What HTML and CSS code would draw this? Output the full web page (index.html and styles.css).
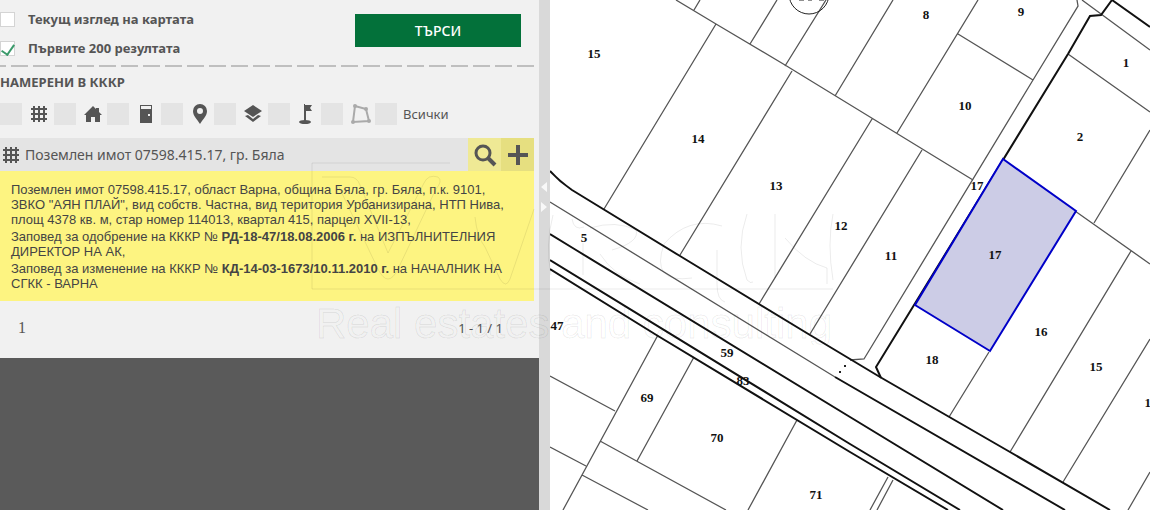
FILE: index.html
```html
<!doctype html>
<html lang="bg">
<head>
    <title>КККР</title>
    <meta charset="utf-8" />
    <meta name="viewport" content="width=device-width, initial-scale=1" />
    <link rel="stylesheet" href="styles.css">
</head>

<body>
<div id="container">
	<div id="sidebar">
		<form id="search">
			<div class="options">
				<label class="option"><input type="checkbox" class="check">Текущ изглед на картата</label>
				<label class="option"><input type="checkbox" class="check" checked>Първите 200 резултата</label>
			</div>
			<button type="button" id="find">ТЪРСИ</button>
		</form>
		<div class="dashes"></div>

		<h3>НАМЕРЕНИ В КККР</h3>
		<div id="filters">
			<label class="filter"><input type="checkbox" class="box" aria-label="Имоти">
				<svg width="18" height="18" viewBox="0 0 18 18"><path class="grid" d="M4 1v16M9 1v16M14 1v16M1 4h16M1 9h16M1 14h16"/></svg></label>
			<label class="filter"><input type="checkbox" class="box" aria-label="Сгради">
				<svg width="18" height="18" viewBox="0 0 18 18"><path d="M9 1l3 3V3h3v4l3 3h-2v7h-5v-5H7v5H2v-7H0z"/></svg></label>
			<label class="filter"><input type="checkbox" class="box" aria-label="Обекти">
				<svg width="18" height="18" viewBox="0 0 18 18"><path fill-rule="evenodd" d="M3 0h12v18H3zM4 1v3h10V1zM11 9v2h2V9z"/></svg></label>
			<label class="filter"><input type="checkbox" class="box" aria-label="Адреси">
				<svg width="18" height="20" viewBox="0 0 18 20"><path fill-rule="evenodd" d="M9 0a7 7 0 0 1 7 7c0 5-4 8-7 13C6 15 2 12 2 7a7 7 0 0 1 7-7zM9 4a3 3 0 1 0 0 6a3 3 0 0 0 0-6z"/></svg></label>
			<label class="filter"><input type="checkbox" class="box" aria-label="Слоеве">
				<svg width="18" height="18" viewBox="0 0 18 18"><path d="M9 0l9 6-9 6-9-6zM1 11l3-1 5 4 5-4 3 1-8 6z"/></svg></label>
			<label class="filter"><input type="checkbox" class="box" aria-label="Точки">
				<svg width="18" height="20" viewBox="0 0 18 20"><path d="M6 0h1v1h7l-2 3 2 3H8v10H6z"/><ellipse cx="7" cy="18" rx="6" ry="2"/></svg></label>
			<label class="filter"><input type="checkbox" class="box" aria-label="Граници">
				<svg width="20" height="20" viewBox="0 0 20 20"><path class="shape" d="M4 2l11 3 3 12-16 1z"/><circle class="node" cx="4" cy="2" r="2"/><circle class="node" cx="15" cy="5" r="2"/><circle class="node" cx="18" cy="17" r="2"/><circle class="node" cx="2" cy="18" r="2"/></svg></label>
			<label class="filter all"><input type="checkbox" class="box">Всички</label>
		</div>

		<div class="result">
			<svg width="18" height="18" viewBox="0 0 18 18"><path class="grid" d="M4 1v16M9 1v16M14 1v16M1 4h16M1 9h16M1 14h16"/></svg>
			<span class="title">Поземлен имот 07598.415.17, гр. Бяла</span>
			<button type="button" class="tool zoom" aria-label="Покажи">
				<svg width="24" height="24" viewBox="0 0 24 24"><circle class="lens" cx="10" cy="10" r="7"/><path class="handle" d="M15 15l7 7"/></svg></button>
			<button type="button" class="tool add" aria-label="Добави">
				<svg width="20" height="20" viewBox="0 0 20 20"><path d="M8 0h4v8h8v4h-8v8H8v-8H0V8h8z"/></svg></button>
		</div>
		<div class="details">
			<p>Поземлен имот 07598.415.17, област Варна, община Бяла, гр. Бяла, п.к. 9101,<br>
			ЗВКО "АЯН ПЛАЙ", вид собств. Частна, вид територия Урбанизирана, НТП Нива,<br>
			площ 4378 кв. м, стар номер 114013, квартал 415, парцел XVII-13,</p>
			<p>Заповед за одобрение на КККР № <b>РД-18-47/18.08.2006 г.</b> на ИЗПЪЛНИТЕЛНИЯ<br>
			ДИРЕКТОР НА АК,</p>
			<p>Заповед за изменение на КККР № <b>КД-14-03-1673/10.11.2010 г.</b> на НАЧАЛНИК НА<br>
			СГКК - ВАРНА</p>
		</div>
		<div class="pager">
			<span class="page">1</span>
			<span>1 - 1 / 1</span>
		</div>
	</div>

	<div id="splitter">
		<svg width="8" height="32" viewBox="0 0 8 32"><path d="M7 1v10L1 6zM1 21v10l6-5z"/></svg>
	</div>

	<div id="map">
		<svg viewBox="550 0 600 510" preserveAspectRatio="xMinYMin slice">
			<!-- parcel borders -->
			<g class="border">
				<path d="M676 0L716 24L785 65L973 180M700 0L694 10M716 24L604 209M777 0L750 44M826 0L785 66M792 71L680 255M893 0L835 96M872 119L759 304M978 0L897 133M958 34L1033 80M922 150L810 334"/>
				<path d="M1077 0L1078 6L1033 80L864 359L850 360M1082 0L1150 50M1068 54L1150 112M1150 130L1094 223M1075 211L1150 264M1131 251L1010 452M1150 339L1063 482M1150 472L1128 510M989 352L949 417"/>
				<path d="M550 202L835 377M658 335L563 510M694 357L637 461M600 441L726 510M550 376L615 411M550 447L586 466M582 475L648 510M797 420L748 510M888 477L870 510M893 480L877 510"/>
			</g>
			<!-- roads -->
			<g class="road">
				<path d="M550 171Q560 182 572 190L680 256L810 335L880 377L1010 452L1110 510M835 377L1065 510M550 234L576 250L850 417L1003 510M550 260L850 444L960 510M550 269L658 336L850 452L948 510"/>
				<path d="M1150 27L1112 0L1101 15L1090 16L1068 54L876 367L881 378"/>
			</g>
			<circle class="block" cx="809" cy="-6" r="20"/>
			<path class="block" d="M799 0h5M808 0h4M819 0h5"/>
			<path class="dots" d="M844 366h2M839 372h2"/>
			<path class="selected" d="M1003 159L1076 211L990 351L915 305z"/>
			<g class="numbers">
				<text x="594" y="58">15</text>
				<text x="698" y="143">14</text>
				<text x="776" y="190">13</text>
				<text x="841" y="230">12</text>
				<text x="891" y="260">11</text>
				<text x="926" y="19">8</text>
				<text x="1021" y="16">9</text>
				<text x="965" y="110">10</text>
				<text x="1126" y="67">1</text>
				<text x="1080" y="141">2</text>
				<text x="977" y="190">17</text>
				<text x="995" y="259">17</text>
				<text x="1041" y="336">16</text>
				<text x="1096" y="371">15</text>
				<text x="1151" y="407">14</text>
				<text x="932" y="364">18</text>
				<text x="584" y="242">5</text>
				<text x="557" y="330">47</text>
				<text x="727" y="357">59</text>
				<text x="743" y="385">83</text>
				<text x="647" y="402">69</text>
				<text x="717" y="442">70</text>
				<text x="816" y="499">71</text>
			</g>
		</svg>
	</div>

	<svg id="watermark" width="540" height="190" viewBox="305 155 540 190">
		<path d="M450 163H312V289H833"/>
		<path d="M322 177h28q7 0 10 8l28 68 36-70q4-9 14-6q5 4-2 12l-38 80q-10 20-20 0l-40-84"/>
		<path d="M475 217q2 20 10 30l15 32q6 10 10 0l24-70M553 215q-8 30-2 60M572 219q2 12 12 8M583 243v32M590 228q26-8 46 2q4 12-24 20M600 254q14 22 40 30M722 226q-34-10-58 18q-14 40 28 34M717 250v34q0 16 8 18M747 214q-12 34 0 66q4 4 6 2M775 214v64M785 238q20 24 42 30v16M833 214q-6 30 0 66"/>
		<text x="316" y="338">Real estates and consulting</text>
	</svg>
</div>
</body>
</html>
```
FILE: styles.css
```css
* {
	box-sizing: border-box;
}

body {
	margin: 0;
	background: #5a5a5a;
	color: #555;
	font-family: "Noto Sans", sans-serif;
	font-size: 13px;
}

button, input {
	margin: 0;
	padding: 0;
	border: 0;
	font-family: inherit;
}

#container {
	position: relative;
	display: grid;
	grid-template-columns: 539fr 11px 600fr;
	height: 100vh;
	min-height: 480px;
	overflow: hidden;
}

#sidebar {
	align-self: start;
	background: #f1f1f1;
}

#sidebar svg {
	fill: #555;
}

/* search form */
#search {
	display: flex;
	justify-content: space-between;
	align-items: flex-start;
	padding: 10px 18px 8px 0;
}

.option {
	display: flex;
	align-items: center;
	gap: 13px;
	height: 18px;
	margin-bottom: 11px;
	font-weight: bold;
}

.option:last-child {
	margin-bottom: 0;
}

.check {
	appearance: none;
	display: flex;
	justify-content: center;
	width: 15px;
	height: 15px;
	background: white;
	border: 1px solid #d4d4d4;
}

.check:checked::after {
	content: "";
	width: 6px;
	height: 11px;
	border: solid #3b9a6b;
	border-width: 0 2px 2px 0;
	transform: rotate(35deg);
}

#find {
	width: 166px;
	height: 33px;
	margin-top: 4px;
	background: #03713a;
	color: white;
	font-size: 14px;
	font-weight: 500;
}

.dashes {
	height: 2px;
	margin-right: 5px;
	background: repeating-linear-gradient(to right, #bfbfbf 0, #bfbfbf 17px, transparent 17px, transparent 22px) -11px 0;
}

h3 {
	margin: 6px 0 12px;
	font-size: 13px;
	line-height: 18px;
}

/* type filters */
#filters {
	display: grid;
	grid-template-columns: repeat(7, 1fr) 164px;
	margin-bottom: 13px;
}

.filter {
	display: flex;
	align-items: center;
	gap: 8px;
	height: 22px;
}

.box {
	appearance: none;
	width: 22px;
	height: 22px;
	background: #e4e4e4;
}

.grid {
	fill: none;
	stroke: #555;
	stroke-width: 2;
}

.shape {
	fill: none;
	stroke: #aaa;
	stroke-width: 2;
}

.node {
	fill: #aaa;
}

.all {
	gap: 6px;
}

/* found property */
.result {
	display: flex;
	align-items: center;
	height: 33px;
	margin-right: 5px;
	padding-left: 2px;
	background: #e4e4e4;
}

.title {
	flex: 1;
	padding-left: 5px;
	font-size: 14px;
}

.tool {
	display: flex;
	align-items: center;
	justify-content: center;
	width: 33px;
	height: 33px;
}

.zoom {
	background: #efe995;
}

.add {
	background: #e6df80;
}

.lens, .handle {
	fill: none;
	stroke: #555;
	stroke-width: 3;
}

.handle {
	stroke-width: 4;
}

.details {
	margin-right: 5px;
	padding: 11px 11px 8px;
	background: #fdf481;
	color: #444;
	font-family: "Liberation Sans", Arial, sans-serif;
	font-size: 13px;
	line-height: 15px;
	white-space: nowrap;
}

.details p {
	margin: 0 0 2px;
}

.pager {
	display: flex;
	justify-content: space-between;
	align-items: center;
	height: 57px;
	padding: 0 36px 4px 18px;
}

.page {
	font-family: "Liberation Serif", serif;
	font-size: 16px;
}

#splitter {
	padding: 181px 0 0 1px;
	background: #d9d9d9;
}

#splitter svg {
	display: block;
	fill: #f8f8f8;
}

/* map */
#map {
	background: white;
	overflow: hidden;
}

#map svg {
	display: block;
	width: 100%;
	height: 100%;
}

.border {
	fill: none;
	stroke: #555;
	stroke-width: 1.3;
}

.road {
	fill: none;
	stroke: #111;
	stroke-width: 2;
}

.block {
	fill: none;
	stroke: #222;
}

.dots {
	stroke: #222;
	stroke-width: 2;
}

.selected {
	fill: #cccce6;
	stroke: #0000c8;
	stroke-width: 2;
}

.numbers {
	font-family: "Liberation Serif", serif;
	font-size: 13px;
	font-weight: bold;
	text-anchor: middle;
	fill: #111;
}

#watermark {
	position: absolute;
	left: 305px;
	top: 155px;
	fill: none;
	stroke: #000;
	stroke-opacity: 0.08;
	pointer-events: none;
}

#watermark text {
	font-family: "Liberation Sans", Arial, sans-serif;
	font-size: 42px;
}
```
